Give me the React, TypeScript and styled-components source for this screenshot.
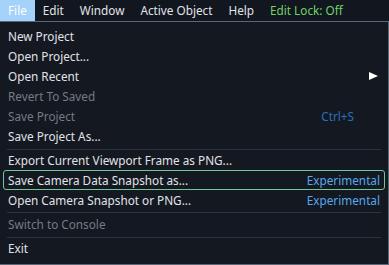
import { FC } from 'react';
import styled, { createGlobalStyle } from 'styled-components';

const GlobalStyle = createGlobalStyle`
    html, body {
        margin: 0;
        padding: 0;
        background: #12161f;
    }
    body {
        font-family: 'Noto Sans', 'Open Sans', sans-serif;
        font-size: 11.75px;
        color: #e1e3e7;
    }
`;

const Screen = styled.div`
    width: 389px;
    height: 265px;
    display: flex;
    flex-direction: column;
    overflow: hidden;
    background: #12161f;
`;

const MenuBar = styled.div`
    display: flex;
    height: 21px;
    align-items: stretch;
    flex-shrink: 0;
`;

const BarItem = styled.div<{ $active?: boolean; $accent?: boolean }>`
    display: flex;
    align-items: center;
    padding: 0 8px;
    line-height: 21px;
    color: ${(p) => (p.$accent ? '#6fd36a' : '#e1e3e7')};
    background: ${(p) => (p.$active ? '#a4d2fa' : 'transparent')};
    ${(p) => p.$active && 'color: #fff;'}
`;

const Popup = styled.div`
    flex: 1;
    border-top: 1px solid #586878;
    border-right: 1px solid #586878;
    border-bottom: 1px solid #586878;
    background: #131821;
    padding: 4px 0 5px 0;
    display: flex;
    flex-direction: column;
`;

const Item = styled.div<{ $disabled?: boolean; $hover?: boolean }>`
    display: flex;
    align-items: center;
    height: 20px;
    margin: 0 3px;
    padding: 0 4px;
    border: 1px solid ${(p) => (p.$hover ? '#72c79a' : 'transparent')};
    border-radius: 3px;
    color: ${(p) => (p.$disabled ? '#767b84' : '#e1e3e7')};
    box-sizing: border-box;
    white-space: nowrap;
`;

const Label = styled.span`
    flex: 1;
`;

const Shortcut = styled.span<{ $disabled?: boolean }>`
    color: ${(p) => (p.$disabled ? '#2c6fb8' : '#5aa7ea')};
    margin-right: ${(p) => (p.$disabled ? '26px' : '0')};
`;

const Arrow = styled.span`
    width: 0;
    height: 0;
    border-top: 4.5px solid transparent;
    border-bottom: 4.5px solid transparent;
    border-left: 9px solid #ffffff;
    margin-right: 2px;
`;

const Separator = styled.div<{ $offset?: number }>`
    height: 1px;
    margin: ${(p) => (p.$offset ?? 2)}px 7px ${(p) => 3 - (p.$offset ?? 2)}px 7px;
    background: #2c333d;
`;

type Entry =
    | { sep: true; offset?: number }
    | { sep?: false; label: string; disabled?: boolean; hover?: boolean; shortcut?: string; sub?: boolean };

const entries: Entry[] = [
    { label: 'New Project' },
    { label: 'Open Project...' },
    { label: 'Open Recent', sub: true },
    { label: 'Revert To Saved', disabled: true },
    { label: 'Save Project', disabled: true, shortcut: 'Ctrl+S' },
    { label: 'Save Project As...' },
    { sep: true, offset: 3 },
    { label: 'Export Current Viewport Frame as PNG...' },
    { label: 'Save Camera Data Snapshot as...', hover: true, shortcut: 'Experimental' },
    { label: 'Open Camera Snapshot or PNG...', shortcut: 'Experimental' },
    { sep: true },
    { label: 'Switch to Console', disabled: true },
    { sep: true, offset: 3 },
    { label: 'Exit' },
];

const menus = ['File', 'Edit', 'Window', 'Active Object', 'Help'];

const App: FC = () => {
    return (
        <Screen>
            <GlobalStyle />
            <MenuBar>
                {menus.map((m) => (
                    <BarItem key={m} $active={m === 'File'}>
                        {m}
                    </BarItem>
                ))}
                <BarItem $accent>Edit Lock: Off</BarItem>
            </MenuBar>
            <Popup>
                {entries.map((e, i) =>
                    e.sep ? (
                        <Separator key={i} $offset={e.offset} />
                    ) : (
                        <Item key={i} $disabled={e.disabled} $hover={e.hover}>
                            <Label>{e.label}</Label>
                            {e.shortcut && <Shortcut $disabled={e.disabled}>{e.shortcut}</Shortcut>}
                            {e.sub && <Arrow />}
                        </Item>
                    )
                )}
            </Popup>
        </Screen>
    );
};

export default App;
